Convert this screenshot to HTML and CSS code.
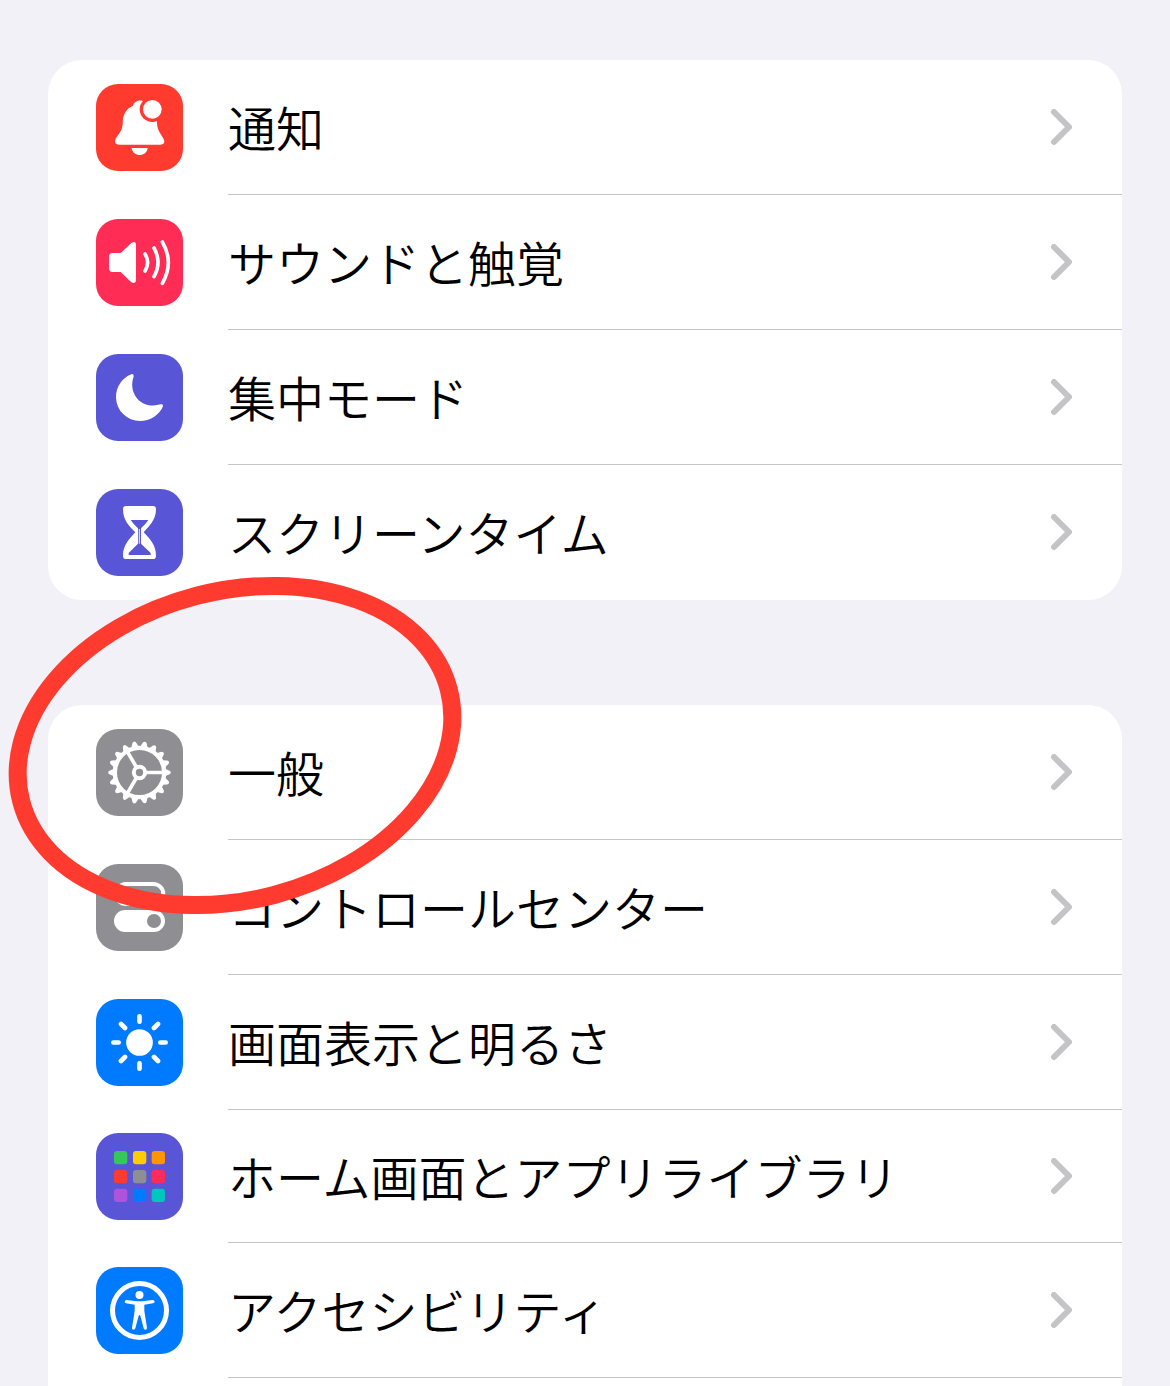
FILE: index.html
```html
<!DOCTYPE html>
<html lang="ja">
<head>
  <meta charset="UTF-8" />
  <meta name="viewport" content="width=device-width, initial-scale=1" />
  <title>設定</title>
  <link rel="stylesheet" href="styles.css">
</head>
<body>
  <svg class="defs" aria-hidden="true">
    <symbol id="chevron" viewBox="0 0 22 38">
      <path d="M4 3L19 18L4 33" fill="none" stroke="#c4c4c6" stroke-width="6" stroke-linecap="round" stroke-linejoin="round"/>
    </symbol>
  </svg>

  <nav class="group">
    <a class="row" href="#notifications">
      <svg class="icon red" viewBox="18 18 261 261">
        <path fill="#fff" d="M160 70C154 65 134 66 128 84C108 92 98 110 98 138C97 165 76 174 75 190Q75 200 86 200H212Q223 200 223 190C221 174 203 165 201 138V110Z"/>
        <circle cx="187" cy="94" r="38" fill="#ff3b30"/>
        <circle cx="187" cy="94" r="28" fill="#fff"/>
        <path fill="#fff" d="M125 210H173C170 238 128 238 125 210Z"/>
      </svg>
      <span class="label">通知</span>
      <svg class="chevron"><use href="#chevron"/></svg>
    </a>
    <a class="row" href="#sounds">
      <svg class="icon pink" viewBox="18 18 261 261">
        <path fill="#fff" d="M68 120H92L124 90Q138 82 138 96V202Q138 214 124 208L92 177H68Q57 177 57 166V131Q57 120 68 120Z"/>
        <path class="line" stroke-width="11" d="M165 123Q181 148 165 174M192 105Q216 148 192 191M217 87Q253 148 217 211"/>
      </svg>
      <span class="label">サウンドと触覚</span>
      <svg class="chevron"><use href="#chevron"/></svg>
    </a>
    <a class="row" href="#focus">
      <svg class="icon indigo" viewBox="18 18 261 261">
        <path fill="#fff" d="M124 79Q132 76 131 86C124 104 124 130 142 152C160 173 190 176 212 169Q220 167 219 175C208 202 180 219 150 219A72 72 0 0 1 78 148C78 116 96 90 124 79Z"/>
      </svg>
      <span class="label">集中モード</span>
      <svg class="chevron"><use href="#chevron"/></svg>
    </a>
    <a class="row" href="#screentime">
      <svg class="icon indigo" viewBox="18 18 261 261">
        <path fill="#fff" d="M108 69H189Q198 69 198 79C198 112 176 130 161 148C180 168 198 186 198 218Q198 228 189 228H108Q99 228 99 218C99 186 118 168 136 148C118 130 99 112 99 79Q99 69 108 69Z"/>
        <path fill="#5856d6" d="M122 111H175Q168 122 153 136V182L182 210V216H116V210L144 182V136Q129 122 122 111Z"/>
        <path stroke="#fff" stroke-width="3" d="M148 138V182"/>
      </svg>
      <span class="label">スクリーンタイム</span>
      <svg class="chevron"><use href="#chevron"/></svg>
    </a>
  </nav>

  <nav class="group group-last">
    <a class="row" href="#general">
      <svg class="icon gray" viewBox="18 18 261 261">
        <g fill="#fff">
          <path id="teeth" d="M72 137L58 143Q51 148 58 154L72 160ZM225 137L239 143Q246 148 239 154L225 160Z"/>
          <use href="#teeth" transform="rotate(20 148.5 148.5)"/>
          <use href="#teeth" transform="rotate(40 148.5 148.5)"/>
          <use href="#teeth" transform="rotate(60 148.5 148.5)"/>
          <use href="#teeth" transform="rotate(80 148.5 148.5)"/>
          <use href="#teeth" transform="rotate(100 148.5 148.5)"/>
          <use href="#teeth" transform="rotate(120 148.5 148.5)"/>
          <use href="#teeth" transform="rotate(140 148.5 148.5)"/>
          <use href="#teeth" transform="rotate(160 148.5 148.5)"/>
        </g>
        <circle class="line" cx="148.5" cy="148.5" r="74" stroke-width="13"/>
        <circle class="line" cx="148.5" cy="148.5" r="17" stroke-width="12"/>
        <path class="line" stroke-width="11" d="M168 148.5H220M139 132L112 86M139 165L112 211"/>
      </svg>
      <span class="label">一般</span>
      <svg class="chevron"><use href="#chevron"/></svg>
    </a>
    <a class="row" href="#control-center">
      <svg class="icon gray" viewBox="18 18 261 261">
        <rect class="line" x="78" y="78" width="142" height="60" rx="30" stroke-width="12"/>
        <circle cx="105" cy="108" r="22" fill="#fff"/>
        <rect x="72" y="156" width="153" height="66" rx="33" fill="#fff"/>
        <circle cx="192" cy="189" r="21" fill="#8e8e93"/>
      </svg>
      <span class="label">コントロールセンター</span>
      <svg class="chevron"><use href="#chevron"/></svg>
    </a>
    <a class="row" href="#display">
      <svg class="icon blue" viewBox="18 18 261 261">
        <circle cx="148.5" cy="148.5" r="40" fill="#fff"/>
        <path class="line" stroke-width="14" d="M148.5 70V86M148.5 211V227M70 148.5H86M211 148.5H227M93 93L105 105M204 93L192 105M93 204L105 192M204 204L192 192"/>
      </svg>
      <span class="label">画面表示と明るさ</span>
      <svg class="chevron"><use href="#chevron"/></svg>
    </a>
    <a class="row row-short" href="#home-screen">
      <svg class="icon indigo" viewBox="18 18 261 261">
        <rect x="72" y="72" width="40" height="40" rx="9" fill="#34c759"/>
        <rect x="129" y="72" width="40" height="40" rx="9" fill="#ffcc00"/>
        <rect x="185" y="72" width="40" height="40" rx="9" fill="#ff9500"/>
        <rect x="72" y="129" width="40" height="40" rx="9" fill="#ff3b30"/>
        <rect x="129" y="129" width="40" height="40" rx="9" fill="#8e8e93"/>
        <rect x="185" y="129" width="40" height="40" rx="9" fill="#ff2d55"/>
        <rect x="72" y="185" width="40" height="40" rx="9" fill="#af52de"/>
        <rect x="129" y="185" width="40" height="40" rx="9" fill="#007aff"/>
        <rect x="185" y="185" width="40" height="40" rx="9" fill="#00c7be"/>
      </svg>
      <span class="label">ホーム画面とアプリライブラリ</span>
      <svg class="chevron"><use href="#chevron"/></svg>
    </a>
    <a class="row" href="#accessibility">
      <svg class="icon blue" viewBox="18 18 261 261">
        <circle class="line" cx="148.5" cy="148.5" r="81" stroke-width="15"/>
        <circle cx="148.5" cy="102" r="12" fill="#fff"/>
        <path fill="#fff" d="M109 117L140 121H157L188 117Q194 117 194 122Q194 126 189 127L163 131V150L171 200Q171 206 166 206Q162 206 161 202L151 164Q148 160 146 164L136 202Q135 206 130 206Q126 206 126 200L134 150V131L108 127Q104 126 104 122Q104 117 109 117Z"/>
      </svg>
      <span class="label">アクセシビリティ</span>
      <svg class="chevron"><use href="#chevron"/></svg>
    </a>

    <!-- hand-drawn mark around 一般 -->
    <svg class="mark" viewBox="8 577 453 337" aria-hidden="true">
      <ellipse cx="235" cy="745.5" rx="221" ry="154.5" transform="rotate(-14.7 235 745.5)" fill="none" stroke="#ff3b30" stroke-width="18"/>
    </svg>
  </nav>
</body>
</html>
```

FILE: styles.css
```css
:root {
  --bg: #f2f1f8;
  --card: #fff;
  --text: #000;
  --line: #c6c6c8;
}

* {
  box-sizing: border-box;
}

body {
  font-family: "Noto Sans CJK JP", sans-serif;
  font-weight: 350;
  background-color: var(--bg);
  color: var(--text);
  margin: 0;
  padding: 60px 48px 0;
  min-height: 100vh;
  display: flex;
  flex-direction: column;
  gap: 105px;
}

.defs {
  position: absolute;
  width: 0;
  height: 0;
}

.group {
  position: relative;
  background-color: var(--card);
  border-radius: 34px;
}

.group-last {
  flex: 1;
  border-radius: 34px 34px 0 0;
}

.row {
  display: grid;
  grid-template-columns: 87px 1fr 22px;
  align-items: center;
  height: 135px;
  padding: 0 50px 0 48px;
  color: var(--text);
  text-decoration: none;
  /* separator starts at the label */
  background: linear-gradient(var(--line), var(--line)) 180px 100% / 100% 1px no-repeat;
}

.row-short {
  height: 133px;
}

.group:not(.group-last) .row:last-of-type {
  background: none;
}

.icon {
  width: 87px;
  height: 87px;
  border-radius: 22px;
}

.red { background-color: #ff3b30; }
.pink { background-color: #ff2d55; }
.indigo { background-color: #5856d6; }
.gray { background-color: #8e8e93; }
.blue { background-color: #007aff; }

.line {
  fill: none;
  stroke: #fff;
  stroke-linecap: round;
}

.label {
  padding: 0 0 4px 45px;
  font-size: 48px;
  line-height: 72px;
  white-space: nowrap;
}

.chevron {
  width: 22px;
  height: 38px;
}

.mark {
  position: absolute;
  top: -128px;
  left: -40px;
  width: 453px;
  height: 337px;
  overflow: visible;
  pointer-events: none;
}
```
